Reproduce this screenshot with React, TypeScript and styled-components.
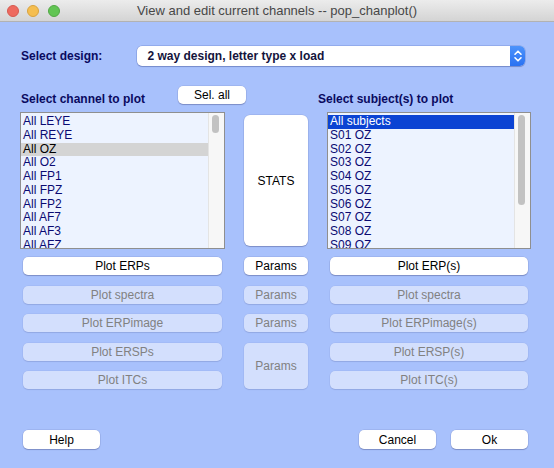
import React from 'react';
import styled, { createGlobalStyle } from 'styled-components';

const Global = createGlobalStyle`
  html, body { margin: 0; padding: 0; width: 554px; height: 468px; overflow: hidden; background: #a8c1fc; }
  body { font-family: "Liberation Sans", Arial, Helvetica, sans-serif; }
  * { box-sizing: border-box; }
`;

const Window = styled.div`
  width: 554px;
  height: 468px;
  display: flex;
  flex-direction: column;
  background: #a8c1fc;
`;

const TitleBar = styled.div`
  height: 22px;
  flex: none;
  display: grid;
  grid-template-columns: 1fr auto 1fr;
  align-items: center;
  background: linear-gradient(#ececec, #d4d4d4);
  border-bottom: 1px solid #b2b2b2;
  font-size: 13px;
  color: #474747;
`;

const Lights = styled.div`
  display: flex;
  gap: 8.5px;
  padding-left: 6.5px;
`;

const Light = styled.span<{ $c: string; $b: string }>`
  width: 12px;
  height: 12px;
  border-radius: 50%;
  background: ${(p) => p.$c};
  border: 0.5px solid ${(p) => p.$b};
`;

const Title = styled.div`
  white-space: nowrap;
`;

const Content = styled.div`
  flex: 1;
  display: flex;
  flex-direction: column;
  padding: 24px 23px 0 20px;
`;

const DesignRow = styled.div`
  display: grid;
  grid-template-columns: 117px 388px;
  height: 20px;
  align-items: center;
`;

const Label = styled.div`
  font-size: 12px;
  font-weight: bold;
  color: #0a0a60;
  padding-left: 1px;
  white-space: nowrap;
  line-height: 14px;
`;

const Select = styled.div`
  height: 20px;
  display: flex;
  align-items: stretch;
  background: #fff;
  border-radius: 5px;
  box-shadow: 0 0 0 0.5px rgba(40, 70, 160, 0.35), 0 1px 1px rgba(0, 0, 60, 0.2);
`;

const SelectText = styled.div`
  flex: 1;
  display: flex;
  align-items: center;
  padding-left: 10.5px;
  font-size: 12px;
  font-weight: bold;
  color: #14143c;
`;

const SelectArrow = styled.div`
  width: 15px;
  border-radius: 0 5px 5px 0;
  background: linear-gradient(#4d93fb, #2a72f2);
  display: flex;
  align-items: center;
  justify-content: center;
`;

const Columns = styled.div`
  display: grid;
  grid-template-columns: 205px 64px 204px;
  column-gap: 19px;
`;

const HeaderRow = styled(Columns)`
  margin-top: 20px;
  height: 26px;
`;

const LeftHeader = styled.div`
  grid-column: 1 / 3;
  display: flex;
  justify-content: space-between;
  align-items: flex-start;
  padding-right: 62px;
`;

const HeaderLabel = styled(Label)<{ $shift?: number }>`
  margin-top: 6px;
  margin-left: ${(p) => p.$shift || 0}px;
`;

const ListsRow = styled(Columns)`
  height: 137px;
`;

const ListBox = styled.div`
  border: 1px solid #8f8f8f;
  background: #edf3ff;
  display: flex;
  overflow: hidden;
`;

const Items = styled.div`
  flex: 1;
  padding-top: 2px;
  overflow: hidden;
`;

const Item = styled.div<{ $sel?: 'gray' | 'blue' }>`
  height: 13.75px;
  line-height: 13.75px;
  padding-left: 2px;
  font-size: 12px;
  white-space: nowrap;
  color: ${(p) => (p.$sel === 'blue' ? '#ffffff' : p.$sel === 'gray' ? '#000000' : '#0a0a72')};
  background: ${(p) => (p.$sel === 'blue' ? '#0b43d3' : p.$sel === 'gray' ? '#d4d4d4' : 'transparent')};
`;

const Track = styled.div`
  width: 16px;
  flex: none;
  background: #f7f7f7;
  border-left: 1px solid #e4e4e4;
  padding: 2px 0 0 3px;
`;

const Thumb = styled.div<{ $h: number }>`
  width: 7px;
  height: ${(p) => p.$h}px;
  border-radius: 4px;
  background: #c2c2c2;
`;

const Button = styled.button<{ $span?: number; $inset?: boolean; $col?: number }>`
  margin: 0 ${(p) => (p.$inset ? 3 : 0)}px;
  grid-row: ${(p) => (p.$span ? `span ${p.$span}` : 'auto')};
  grid-column: ${(p) => (p.$col ? p.$col : 'auto')};
  border: none;
  border-radius: 5px;
  background: #ffffff;
  box-shadow: 0 0 0 0.5px rgba(0, 0, 60, 0.12), 0 1px 1px rgba(0, 0, 60, 0.22);
  font-family: "Liberation Sans", Arial, Helvetica, sans-serif;
  font-size: 12px;
  color: #000;
  padding: 0;
  display: flex;
  align-items: center;
  justify-content: center;

  &:disabled {
    background: #d3dffd;
    color: #818181;
    box-shadow: 0 0 0 0.5px rgba(0, 0, 60, 0.06), 0 1px 1px rgba(0, 0, 60, 0.1);
  }
`;

const SelAll = styled(Button)`
  width: 68px;
  height: 18px;
`;

const StatsButton = styled(Button)`
  margin: 3px 0;
  border-radius: 6px;
`;

const ButtonGrid = styled(Columns)`
  margin-top: 8px;
  grid-template-rows: repeat(5, 18px);
  row-gap: 10.5px;
`;

const Footer = styled.div`
  margin-top: 41px;
  padding: 0 3px;
  display: flex;
  gap: 15px;
  height: 19px;
`;

const FooterButton = styled(Button)`
  width: 77px;
  height: 19px;
`;

const Spacer = styled.div`
  flex: 1;
`;

const channels = ['All LEYE', 'All REYE', 'All OZ', 'All O2', 'All FP1', 'All FPZ', 'All FP2', 'All AF7', 'All AF3', 'All AFZ'];
const subjects = ['All subjects', 'S01 OZ', 'S02 OZ', 'S03 OZ', 'S04 OZ', 'S05 OZ', 'S06 OZ', 'S07 OZ', 'S08 OZ', 'S09 OZ'];

export default function App() {
  return (
    <Window>
      <Global />
      <TitleBar>
        <Lights>
          <Light $c="#ee6a5f" $b="#d65a50" />
          <Light $c="#f5be4f" $b="#d9a33e" />
          <Light $c="#62c554" $b="#52a845" />
        </Lights>
        <Title>View and edit current channels -- pop_chanplot()</Title>
        <div />
      </TitleBar>
      <Content>
        <DesignRow>
          <Label>Select design:</Label>
          <Select>
            <SelectText>2 way design, letter type x load</SelectText>
            <SelectArrow>
              <svg width="10" height="14" viewBox="0 0 10 14">
                <path d="M2 5.2 L5 2.2 L8 5.2" fill="none" stroke="#fff" strokeWidth="1.6" strokeLinecap="round" strokeLinejoin="round" />
                <path d="M2 8.8 L5 11.8 L8 8.8" fill="none" stroke="#fff" strokeWidth="1.6" strokeLinecap="round" strokeLinejoin="round" />
              </svg>
            </SelectArrow>
          </Select>
        </DesignRow>

        <HeaderRow>
          <LeftHeader>
            <HeaderLabel>Select channel to plot</HeaderLabel>
            <SelAll>Sel. all</SelAll>
          </LeftHeader>
          <HeaderLabel $shift={-10}>Select subject(s) to plot</HeaderLabel>
        </HeaderRow>

        <ListsRow>
          <ListBox>
            <Items>
              {channels.map((c, i) => (
                <Item key={c} $sel={i === 2 ? 'gray' : undefined}>{c}</Item>
              ))}
            </Items>
            <Track>
              <Thumb $h={18} />
            </Track>
          </ListBox>
          <StatsButton>STATS</StatsButton>
          <ListBox>
            <Items>
              {subjects.map((s, i) => (
                <Item key={s} $sel={i === 0 ? 'blue' : undefined}>{s}</Item>
              ))}
            </Items>
            <Track>
              <Thumb $h={90} />
            </Track>
          </ListBox>
        </ListsRow>

        <ButtonGrid>
          <Button $inset>Plot ERPs</Button>
          <Button>Params</Button>
          <Button $inset>Plot ERP(s)</Button>

          <Button $inset disabled>Plot spectra</Button>
          <Button disabled>Params</Button>
          <Button $inset disabled>Plot spectra</Button>

          <Button $inset disabled>Plot ERPimage</Button>
          <Button disabled>Params</Button>
          <Button $inset disabled>Plot ERPimage(s)</Button>

          <Button $inset disabled>Plot ERSPs</Button>
          <Button disabled $span={2}>Params</Button>
          <Button $inset disabled>Plot ERSP(s)</Button>

          <Button $inset disabled>Plot ITCs</Button>
          <Button $inset disabled $col={3}>Plot ITC(s)</Button>
        </ButtonGrid>

        <Footer>
          <FooterButton>Help</FooterButton>
          <Spacer />
          <FooterButton>Cancel</FooterButton>
          <FooterButton>Ok</FooterButton>
        </Footer>
      </Content>
    </Window>
  );
}
